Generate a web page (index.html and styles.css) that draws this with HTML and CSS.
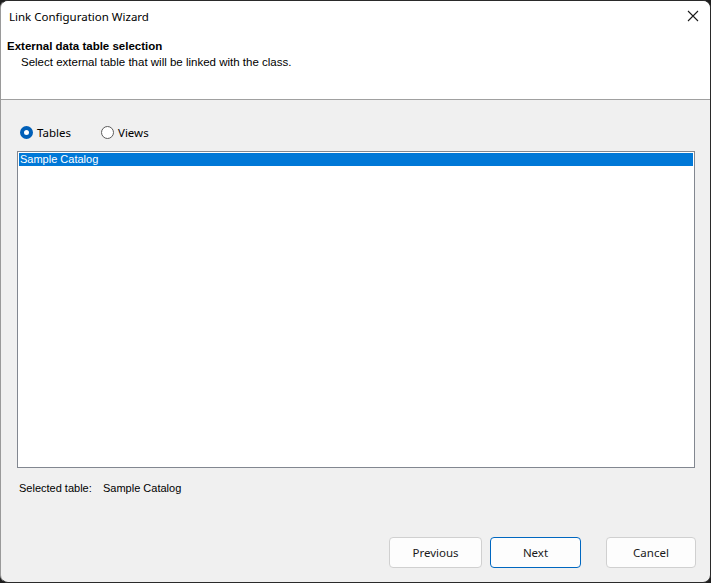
FILE: index.html
```html
<!DOCTYPE html>
<html>
<head>
<meta charset="utf-8">
<link rel="stylesheet" href="styles.css">
</head>
<body>
<div class="window">
  <div class="titlebar">
    <span class="title">Link Configuration Wizard</span>
    <svg class="close" width="12" height="12" viewBox="0 0 12 12"><path d="M1 1 L11 11 M11 1 L1 11" stroke="#1a1a1a" stroke-width="1.1" fill="none"/></svg>
  </div>
  <div class="header">
    <div class="heading">External data table selection</div>
    <div class="subheading">Select external table that will be linked with the class.</div>
  </div>
  <div class="content">
    <div class="radios">
      <label class="radio"><span class="dot checked"></span>Tables</label>
      <label class="radio"><span class="dot"></span>Views</label>
    </div>
    <div class="listbox">
      <div class="item selected">Sample Catalog</div>
    </div>
    <div class="selinfo"><span class="sellabel">Selected table:</span><span>Sample Catalog</span></div>
    <div class="buttons">
      <button class="btn prev">Previous</button>
      <button class="btn next">Next</button>
      <button class="btn cancel">Cancel</button>
    </div>
  </div>
</div>
</body>
</html>
```
FILE: styles.css
```css
html, body {
  margin: 0;
  padding: 0;
  background: #1e1e1e;
}
.window {
  width: 711px;
  height: 583px;
  box-sizing: border-box;
  border: 1px solid #2a2a2a;
  border-left-color: #9a9a9a;
  border-radius: 8px;
  background: #f0f0f0;
  overflow: hidden;
  display: flex;
  flex-direction: column;
  font-family: "Liberation Sans", Arial, sans-serif;
  font-size: 11px;
  color: #000;
}
.titlebar {
  height: 30px;
  background: #fff;
  display: flex;
  align-items: center;
  justify-content: space-between;
  padding: 0 11px 0 8px;
}
.title {
  font-family: "Noto Sans", sans-serif;
  font-size: 11.5px;
  color: #000;
  padding-top: 1px;
}
.close { display: block; }
.header {
  background: #fff;
  height: 69px;
  border-bottom: 1px solid #a0a0a0;
  padding: 8px 0 0 6px;
  box-sizing: border-box;
}
.heading {
  font-weight: bold;
  font-size: 11.5px;
  line-height: 14px;
}
.subheading {
  padding-left: 14px;
  margin-top: 2px;
  line-height: 14px;
  font-size: 11.5px;
}
.content {
  flex: 1;
  display: flex;
  flex-direction: column;
  padding: 0 15px 14px 16px;
}
.radios {
  display: flex;
  margin-top: 25px;
  padding-left: 3px;
  height: 14px;
  align-items: center;
}
.radio {
  display: flex;
  align-items: center;
  gap: 4px;
  font-size: 11.5px;
  font-family: "Noto Sans", sans-serif;
  width: 81px;
}
.dot {
  width: 13px;
  height: 13px;
  box-sizing: border-box;
  border-radius: 50%;
  border: 1px solid #5c5c5c;
  background: #fff;
}
.dot.checked {
  border: 4px solid #005fb8;
  background: #fff;
}
.listbox {
  margin-top: 12px;
  height: 317px;
  box-sizing: border-box;
  border: 1px solid #828790;
  background: #fff;
  padding: 1px;
}
.item {
  height: 13px;
  line-height: 13px;
  padding-left: 1px;
  font-size: 11px;
}
.item.selected {
  background: #0078d7;
  color: #fff;
}
.selinfo {
  margin-top: 13px;
  padding-left: 2px;
  line-height: 14px;
  font-size: 11px;
}
.sellabel {
  display: inline-block;
  width: 84px;
}
.buttons {
  margin-top: auto;
  margin-right: -1px;
  display: flex;
  justify-content: flex-end;
}
.btn {
  height: 31px;
  box-sizing: border-box;
  background: #fdfdfd;
  border: 1px solid #d0d0d0;
  border-radius: 4px;
  font-family: "Noto Sans", sans-serif;
  font-size: 11.5px;
  color: #1a1a1a;
  padding: 0;
}
.prev { width: 93px; }
.next { width: 91px; margin-left: 8px; border-color: #0067c0; }
.cancel { width: 90px; margin-left: 25px; }
```
